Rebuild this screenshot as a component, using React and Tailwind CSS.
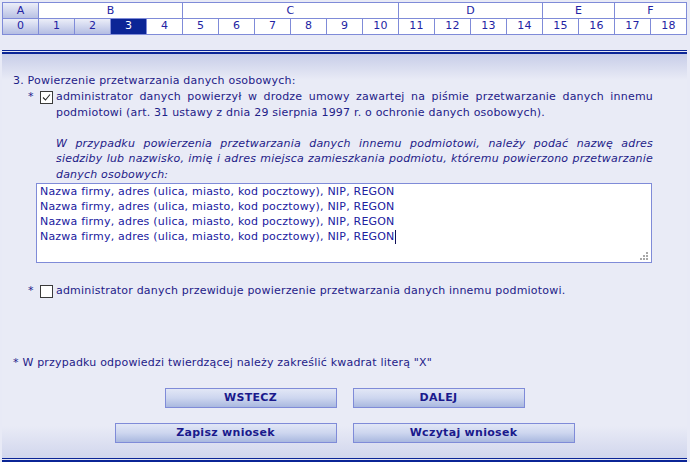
import React from "react";

const BORDER = "border-[#7f8bd8]";

function HeaderTable() {
  const groups = [
    { label: "A", span: "col-span-1", grad: true },
    { label: "B", span: "col-span-4" },
    { label: "C", span: "col-span-6" },
    { label: "D", span: "col-span-4" },
    { label: "E", span: "col-span-2" },
    { label: "F", span: "col-span-2" },
  ];
  const nums = Array.from({ length: 19 }, (_, i) => i);
  return (
    <div className="ml-[2px] mt-[2px] w-[685px] border-r border-b border-[#7f8bd8]">
      <div className="grid grid-cols-[repeat(19,36px)]">
        {groups.map((g) => (
          <div
            key={g.label}
            className={`${g.span} h-[16px] border-l border-t ${BORDER} flex items-center justify-center pt-[1px] text-[#2323a3] ${
              g.grad ? "bg-linear-to-b from-[#eceef8] to-[#b9c1e4]" : "bg-white"
            }`}
          >
            {g.label}
          </div>
        ))}
        {nums.map((n) => {
          let cls = "bg-white text-[#2323a3]";
          if (n < 3) cls = "bg-linear-to-b from-[#eceef8] to-[#b4bde3] text-[#2323a3]";
          if (n === 3) cls = "bg-[#0b2596] text-white";
          return (
            <div
              key={n}
              className={`h-[16px] border-l border-t ${BORDER} flex items-center justify-center ${cls}`}
            >
              {n}
            </div>
          );
        })}
      </div>
    </div>
  );
}

function Checkbox({ checked }) {
  return (
    <div className="mt-[2px] h-[13px] w-[13px] shrink-0 border border-[#3a3a3a] bg-white">
      {checked && (
        <svg width="11" height="11" viewBox="0 0 11 11" className="block">
          <polyline
            points="2,5.5 4.5,8 9,2.5"
            fill="none"
            stroke="#2a2a2a"
            strokeWidth="1.1"
          />
        </svg>
      )}
    </div>
  );
}

function DoubleLine() {
  return (
    <div>
      <div className="h-px bg-[#0b2596]" />
      <div className="h-px bg-[#e4e7f4]" />
      <div className="h-[2px] bg-[#0b2596]" />
    </div>
  );
}

function Button({ w, children }) {
  return (
    <div
      className={`${w} h-[20px] border border-[#7f8bd8] bg-linear-to-b from-[#e2e7f6] via-[#cdd6ef] to-[#a9b8df] flex items-center justify-center font-bold tracking-[0.3px] text-[#1a1a8c]`}
    >
      {children}
    </div>
  );
}

export default function App() {
  const justify = "text-justify [text-align-last:justify]";
  return (
    <div
      className="w-[690px] h-[462px] overflow-hidden bg-[#e8eaf6] text-[11px] tracking-[0.2px] text-[#1e2188]"
      style={{ fontFamily: '"DejaVu Sans", sans-serif' }}
    >
      <HeaderTable />
      <div className="mt-[15px] ml-[2px] w-[685px]">
        <DoubleLine />
        <div className="h-[404px] bg-[linear-gradient(to_bottom,#c7cde8_0px,#e9ebf6_26px,#e9ebf6_372px,#d1d6ed_404px)]">
          <div className="pt-[19px] pl-[11px] leading-[16px]">
            3. Powierzenie przetwarzania danych osobowych:
          </div>
          <div className="flex pl-[26px] leading-[15.5px]">
            <span className="w-[12px] shrink-0">*</span>
            <Checkbox checked />
            <div className="ml-[3px] w-[597px]">
              <div className={justify}>
                administrator danych powierzył w drodze umowy zawartej na piśmie przetwarzanie danych innemu
              </div>
              <div>
                podmiotowi (art. 31 ustawy z dnia 29 sierpnia 1997 r. o ochronie danych osobowych).
              </div>
              <div className="h-[15.5px]" />
              <div className={`${justify} italic`}>
                W przypadku powierzenia przetwarzania danych innemu podmiotowi, należy podać nazwę adres
              </div>
              <div className={`${justify} italic`}>
                siedziby lub nazwisko, imię i adres miejsca zamieszkania podmiotu, któremu powierzono przetwarzanie
              </div>
              <div className="italic">danych osobowych:</div>
            </div>
          </div>
          <div className="relative ml-[34px] mt-[1px] h-[80px] w-[616px] border border-[#7f8bd8] bg-white px-[3px] leading-[15px] text-[#2020a0]">
            <div>Nazwa firmy, adres (ulica, miasto, kod pocztowy), NIP, REGON</div>
            <div>Nazwa firmy, adres (ulica, miasto, kod pocztowy), NIP, REGON</div>
            <div>Nazwa firmy, adres (ulica, miasto, kod pocztowy), NIP, REGON</div>
            <div className="flex items-center">
              <span>Nazwa firmy, adres (ulica, miasto, kod pocztowy), NIP, REGON</span>
              <span className="inline-block h-[14px] w-px bg-[#10105a]" />
            </div>
            <svg
              width="9"
              height="9"
              viewBox="0 0 9 9"
              className="absolute right-[3px] bottom-[2px]"
            >
              <rect x="7" y="1" width="2" height="2" fill="#a8a8a8" />
              <rect x="4" y="4" width="2" height="2" fill="#a8a8a8" />
              <rect x="7" y="4" width="2" height="2" fill="#a8a8a8" />
              <rect x="1" y="7" width="2" height="2" fill="#a8a8a8" />
              <rect x="4" y="7" width="2" height="2" fill="#a8a8a8" />
              <rect x="7" y="7" width="2" height="2" fill="#a8a8a8" />
            </svg>
          </div>
          <div className="mt-[20px] flex pl-[26px] leading-[15.5px]">
            <span className="w-[12px] shrink-0">*</span>
            <Checkbox />
            <div className="ml-[3px]">
              administrator danych przewiduje powierzenie przetwarzania danych innemu podmiotowi.
            </div>
          </div>
          <div className="mt-[56px] pl-[11px] leading-[15.5px]">
            * W przypadku odpowiedzi twierdzącej należy zakreślić kwadrat literą "X"
          </div>
          <div className="mt-[18px] flex justify-center gap-[16px]">
            <Button w="w-[172px]">WSTECZ</Button>
            <Button w="w-[172px]">DALEJ</Button>
          </div>
          <div className="mt-[15px] flex justify-center gap-[16px]">
            <Button w="w-[222px]">Zapisz wniosek</Button>
            <Button w="w-[222px]">Wczytaj wniosek</Button>
          </div>
        </div>
        <DoubleLine />
      </div>
    </div>
  );
}
